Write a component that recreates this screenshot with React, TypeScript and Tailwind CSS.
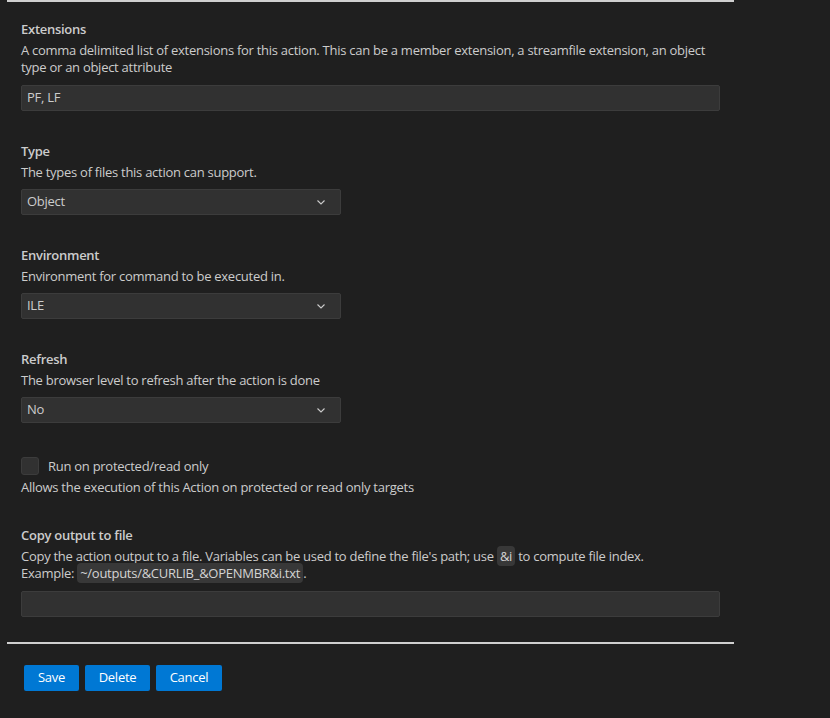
import React from "react";

const font = { fontFamily: '"Segoe UI", "Open Sans", "Noto Sans", sans-serif', letterSpacing: "-0.27px" };

function Chevron() {
  return (
    <svg width="16" height="16" viewBox="0 0 16 16" fill="none" className="text-[#cccccc]">
      <path d="M4.5 6.5 L8 10 L11.5 6.5" stroke="currentColor" strokeWidth="1.1" />
    </svg>
  );
}

function Select({ value }: { value: string }) {
  return (
    <div className="mt-[8px] flex h-[26px] w-[320px] items-center justify-between rounded-[2px] border border-[#3c3c3c] bg-[#313131] pl-[5px] pr-[11px] text-[#cccccc]">
      <span>{value}</span>
      <Chevron />
    </div>
  );
}

function Label({ children }: { children: React.ReactNode }) {
  return <div className="h-[18px] font-semibold leading-[18px] text-[#cccccc]">{children}</div>;
}

function Desc({ children, className = "" }: { children: React.ReactNode; className?: string }) {
  return <div className={`mt-[4px] leading-[17px] text-[#cccccc] ${className}`}>{children}</div>;
}

function Code({ children }: { children: React.ReactNode }) {
  return <span className="rounded-[4px] bg-[#383838] px-[3px] py-[1px] text-[#d4d4d4]">{children}</span>;
}

export default function App() {
  return (
    <div className="min-h-[718px] w-[830px] bg-[#1f1f1f] text-[13px]" style={font}>
      <div className="ml-[7px] h-[2px] w-[727px] bg-[#cfcfcf]" />
      <div className="pl-[21px] pt-[18px]">
        <div className="w-[700px]">
          <Label>Extensions</Label>
          <Desc>
            A comma delimited list of extensions for this action. This can be a member extension, a streamfile extension, an object type or an object attribute
          </Desc>
          <div className="mt-[9px] flex h-[26px] w-[699px] items-center rounded-[2px] border border-[#3c3c3c] bg-[#313131] px-[5px] text-[#cccccc]">
            PF, LF
          </div>
        </div>

        <div className="mt-[31px]">
          <Label>Type</Label>
          <Desc>The types of files this action can support.</Desc>
          <Select value="Object" />
        </div>

        <div className="mt-[31px]">
          <Label>Environment</Label>
          <Desc>Environment for command to be executed in.</Desc>
          <Select value="ILE" />
        </div>

        <div className="mt-[31px]">
          <Label>Refresh</Label>
          <Desc>The browser level to refresh after the action is done</Desc>
          <Select value="No" />
        </div>

        <div className="mt-[34px]">
          <div className="flex items-center">
            <div className="h-[18px] w-[18px] rounded-[3px] border border-[#3c3c3c] bg-[#313131]" />
            <span className="ml-[9px] leading-[18px] text-[#cccccc]">Run on protected/read only</span>
          </div>
          <Desc className="mt-[4px]">Allows the execution of this Action on protected or read only targets</Desc>
        </div>

        <div className="mt-[30px] w-[700px]">
          <Label>Copy output to file</Label>
          <Desc>
            Copy the action output to a file. Variables can be used to define the file's path; use <Code>&amp;i</Code> to compute file index.
            <br />
            Example: <Code>~/outputs/&amp;CURLIB_&amp;OPENMBR&amp;i.txt</Code>.
          </Desc>
          <div className="mt-[9px] h-[26px] w-[699px] rounded-[2px] border border-[#3c3c3c] bg-[#313131]" />
        </div>
      </div>
      <div className="ml-[7px] mt-[25px] h-[2px] w-[727px] bg-[#cfcfcf]" />
      <div className="flex gap-[6px] pl-[24px] pt-[21px]">
        <button className="h-[26px] w-[55px] rounded-[2px] bg-[#0078d4] text-[#ffffff]">Save</button>
        <button className="h-[26px] w-[65px] rounded-[2px] bg-[#0078d4] text-[#ffffff]">Delete</button>
        <button className="h-[26px] w-[66px] rounded-[2px] bg-[#0078d4] text-[#ffffff]">Cancel</button>
      </div>
    </div>
  );
}
